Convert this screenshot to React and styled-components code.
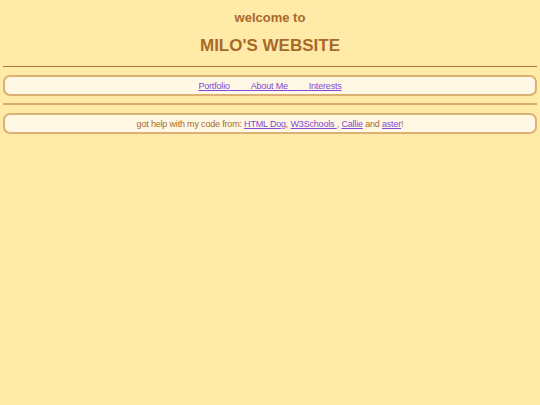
import React from "react";
import styled, { createGlobalStyle } from "styled-components";

const GlobalStyle = createGlobalStyle`
  html, body {
    margin: 0;
    padding: 0;
    background: #ffeaa7;
  }
  body {
    padding: 0 3px;
    font-family: "Liberation Sans", Arial, sans-serif;
    color: #a8692b;
  }
`;

const Welcome = styled.h3`
  margin: 0;
  padding-top: 10px;
  text-align: center;
  font-size: 13px;
  font-weight: bold;
  line-height: 15px;
`;

const Title = styled.h2`
  margin: 0;
  padding-top: 11px;
  text-align: center;
  font-size: 17px;
  font-weight: bold;
  line-height: 20px;
`;

const Rule = styled.hr`
  margin: ${(p) => p.$margin || "0"};
  border: 0;
  height: ${(p) => p.$thick}px;
  background: ${(p) => p.$color};
`;

const Box = styled.div`
  box-sizing: border-box;
  height: 21px;
  border: 2px solid #dbb274;
  border-radius: 7px;
  background: #fff8e5;
  display: flex;
  align-items: center;
  justify-content: center;
  font-size: 9px;
  letter-spacing: -0.18px;
  white-space: pre;
`;

const Link = styled.a`
  color: #8646d6;
  text-decoration: underline;
`;

const pad = "\u00a0\u00a0\u00a0\u00a0";

export default function App() {
  return (
    <>
      <GlobalStyle />
      <Welcome>welcome to</Welcome>
      <Title>MILO'S WEBSITE</Title>
      <Rule $thick={1} $color="#ad7434" $margin="10px 0 8px" />
      <Box>
        <Link href="#">Portfolio{pad}</Link>
        <Link href="#">{"\u00a0"}{pad}About Me{pad}</Link>
        <Link href="#">{"\u00a0"}{pad}Interests</Link>
      </Box>
      <Rule $thick={2} $color="#d8ad66" $margin="7px 0 8px" />
      <Box>
        got help with my code from: <Link href="#">HTML Dog</Link>,{" "}
        <Link href="#">W3Schools </Link>, <Link href="#">Callie</Link> and{" "}
        <Link href="#">aster</Link>!
      </Box>
    </>
  );
}
